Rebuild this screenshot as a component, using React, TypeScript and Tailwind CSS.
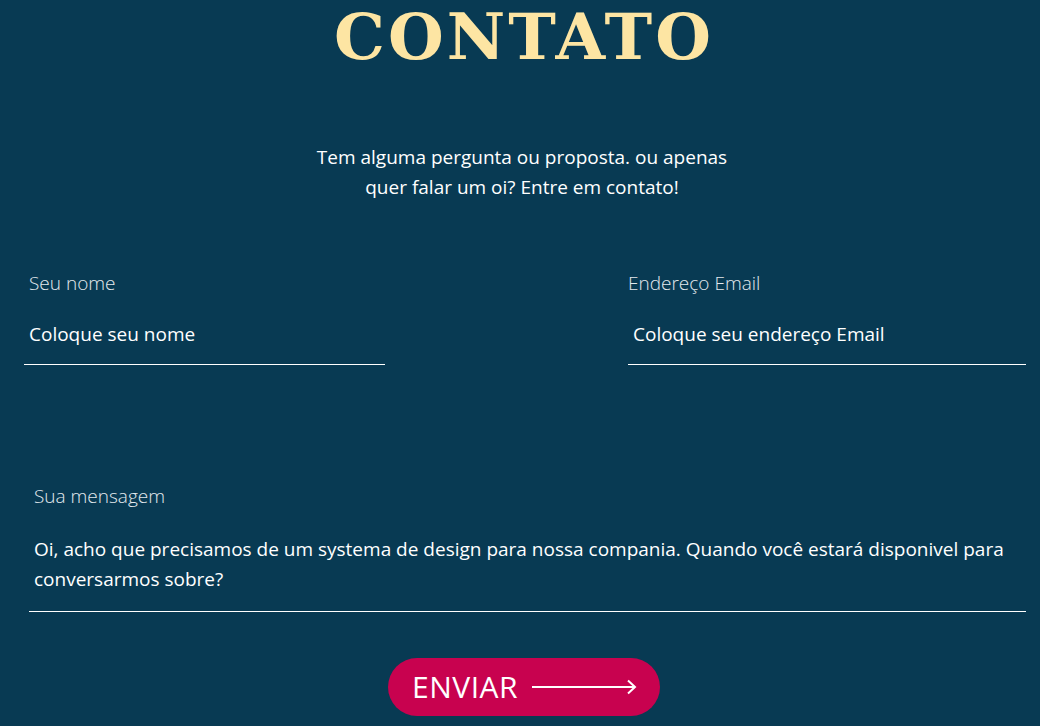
export default function App() {
  return (
    <div
      className="w-[1040px] h-[726px] overflow-hidden bg-[#083a53] text-white"
      style={{ fontFamily: '"Open Sans", "Noto Sans", sans-serif' }}
    >
      <h1
        className="pt-[5px] pl-[8px] text-center text-[64px] leading-[64px] font-bold text-[#fde5a3] tracking-[3px]"
        style={{ fontFamily: '"DejaVu Serif", "Liberation Serif", serif' }}
      >
        CONTATO
      </h1>

      <p className="mt-[73px] pl-[4px] text-center text-[19px] leading-[30px] text-white">
        Tem alguma pergunta ou proposta. ou apenas
        <br />
        quer falar um oi? Entre em contato!
      </p>

      <div className="mt-[69px] flex justify-between pl-[24px] pr-[14px]">
        <div className="w-[361px]">
          <label className="block pl-[5px] text-[19px] font-light text-[#e3e9ee] leading-6">Seu nome</label>
          <div className="mt-[27px] pl-[5px] pb-[18px] border-b border-white text-[19px] font-medium leading-6">
            Coloque seu nome
          </div>
        </div>
        <div className="w-[398px]">
          <label className="block text-[19px] font-light text-[#e3e9ee] leading-6">Endereço Email</label>
          <div className="mt-[27px] pl-[5px] pb-[18px] border-b border-white text-[19px] font-medium leading-6">
            Coloque seu endereço Email
          </div>
        </div>
      </div>

      <div className="mt-[119px] ml-[29px] mr-[14px]">
        <label className="block pl-[5px] text-[19px] font-light text-[#e3e9ee] leading-6">Sua mensagem</label>
        <div className="mt-[26px] pl-[5px] pb-[17px] border-b border-white text-[19px] font-medium leading-[30px]">
          Oi, acho que precisamos de um systema de design para nossa compania. Quando você estará disponivel para
          <br />
          conversarmos sobre?
        </div>
      </div>

      <div className="mt-[46px] flex justify-center pl-[8px]">
        <button className="flex items-center gap-[14px] h-[58px] w-[272px] rounded-full bg-[#c8024f] pl-[24px] text-white">
          <span className="text-[30px] font-normal leading-none tracking-[0.5px]">ENVIAR</span>
          <svg width="106" height="16" viewBox="0 0 106 16" fill="none" stroke="white" strokeWidth="2">
            <path d="M0 8 H103" />
            <path d="M96 1.5 L103 8 L96 14.5" />
          </svg>
        </button>
      </div>
    </div>
  );
}
